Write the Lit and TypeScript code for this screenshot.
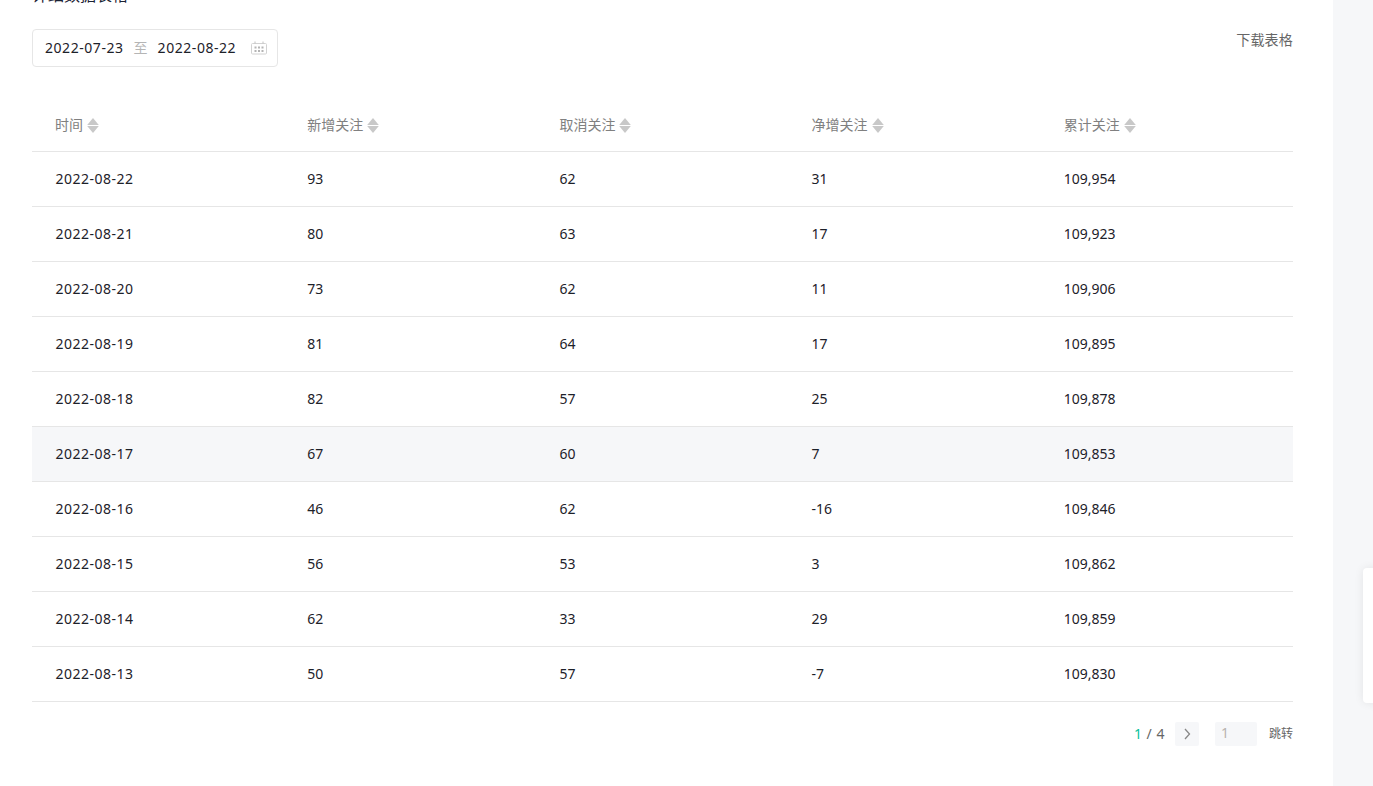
import { LitElement, html, css, svg } from "lit";
import { customElement } from "lit/decorators.js";

const rows = [
  ["2022-08-22", "93", "62", "31", "109,954"],
  ["2022-08-21", "80", "63", "17", "109,923"],
  ["2022-08-20", "73", "62", "11", "109,906"],
  ["2022-08-19", "81", "64", "17", "109,895"],
  ["2022-08-18", "82", "57", "25", "109,878"],
  ["2022-08-17", "67", "60", "7", "109,853"],
  ["2022-08-16", "46", "62", "-16", "109,846"],
  ["2022-08-15", "56", "53", "3", "109,862"],
  ["2022-08-14", "62", "33", "29", "109,859"],
  ["2022-08-13", "50", "57", "-7", "109,830"],
];
const heads = ["时间", "新增关注", "取消关注", "净增关注", "累计关注"];

@customElement("app-root")
export class AppRoot extends LitElement {
  static styles = css`
    :host {
      display: block;
      width: 1373px;
      height: 786px;
      overflow: hidden;
      position: relative;
      background: #fff;
      font-family: "Noto Sans", "Noto Sans CJK SC", sans-serif;
      color: #1d2129;
      font-size: 14px;
    }
    .layout { display: flex; height: 786px; }
    .main { width: 1333px; box-sizing: border-box; padding: 0 40px 0 32px; }
    .side { flex: 1; background: #f6f7f9; }
    .title { margin-top: -17px; height: 24px; font-size: 16px; line-height: 24px; color: #1a2233; }
    .toolbar { display: flex; justify-content: space-between; align-items: flex-start; margin-top: 22px; height: 38px; }
    .range {
      box-sizing: border-box; width: 246px; height: 38px; border: 1px solid #e6e6e6; border-radius: 4px;
      display: flex; align-items: center; padding: 0 10px 2px 12px; letter-spacing: 0.55px;
    }
    .range .sep { color: #b5b5b5; margin: 0 10px; letter-spacing: 0; }
    .range svg { margin-left: auto; margin-top: 2px; }
    .download { font-size: 14px; color: #666; line-height: 20px; margin: 1px 0 0 0; letter-spacing: 0.2px; }
    .grid { display: grid; grid-template-columns: repeat(5, 1fr); }
    .head, .row { display: contents; }
    .head > div {
      height: 52px; margin-top: 33px; box-sizing: border-box; border-bottom: 1px solid #e6e6e6;
      color: #808080; font-size: 14px; padding: 15px 0 0 23px; display: flex; align-items: flex-start; gap: 4px; line-height: 20px;
    }
    .head svg { margin-top: 2px; }
    .row > div {
      height: 55px; box-sizing: border-box; border-bottom: 1px solid #e6e6e6; padding: 0 0 2px 23px;
      display: flex; align-items: center; color: #1d2129;
    }
    .row > div.date { letter-spacing: 0.5px; padding-left: 23.4px; }
    .row.hl > div { background: #f6f7f9; }
    .pager { display: flex; justify-content: flex-end; align-items: center; margin-top: 20px; height: 24px; }
    .num { color: #666; letter-spacing: 0.5px; padding-bottom: 2px; }
    .num b { font-weight: 400; color: #07c19a; }
    .btn { width: 24px; height: 24px; background: #f6f7f9; border-radius: 2px; margin-left: 10px; display: flex; align-items: center; justify-content: center; }
    .input { box-sizing: border-box; width: 42px; height: 24px; background: #f6f7f9; border-radius: 2px; margin-left: 16px; padding-left: 6px; color: #b8b3b0; line-height: 22px; }
    .go { font-size: 12px; color: #666; margin-left: 12px; padding-bottom: 2px; }
    .card {
      position: absolute; left: 1363px; top: 568px; width: 40px; height: 135px; background: #fff;
      border-radius: 4px; box-shadow: 0 0 10px rgba(0, 0, 0, 0.08);
    }
  `;

  private sort() {
    return svg`<svg width="12" height="16" viewBox="0 0 12 16" fill="#c8c8c8"><path d="M6 1 11.8 8H.2Z"/><path d="M6 16 .2 9h11.6Z"/></svg>`;
  }

  render() {
    return html`
      <div class="layout">
        <div class="main">
          <div class="title">详细数据表格</div>
          <div class="toolbar">
            <div class="range">
              <span>2022-07-23</span><span class="sep">至</span><span>2022-08-22</span>
              <svg width="16" height="14" viewBox="0 0 16 14" fill="none" stroke="#d2d2d2">
                <rect x=".5" y="2.5" width="15" height="10.5" rx="1"/>
                <path d="M4 .5v2M12 .5v2" stroke="#c0c0c0"/>
                <path fill="#b4b4b4" stroke="none" d="M3.5 5.5h2v2h-2zM7 5.5h2v2H7zM10.5 5.5h2v2h-2zM3.5 9h2v2h-2zM7 9h2v2H7zM10.5 9h2v2h-2z"/>
              </svg>
            </div>
            <div class="download">下载表格</div>
          </div>
          <div class="grid">
            <div class="head">${heads.map((h) => html`<div><span>${h}</span>${this.sort()}</div>`)}</div>
            ${rows.map(
              (r, i) => html`<div class="row ${i === 5 ? "hl" : ""}">${r.map((c, j) => html`<div class=${j === 0 ? "date" : ""}>${c}</div>`)}</div>`
            )}
          </div>
          <div class="pager">
            <span class="num"><b>1</b> / 4</span>
            <span class="btn">
              <svg width="8" height="12" viewBox="0 0 8 12" fill="none" stroke="#888" stroke-width="1.3"><path d="M2 1 6.5 6 2 11"/></svg>
            </span>
            <span class="input">1</span>
            <span class="go">跳转</span>
          </div>
        </div>
        <div class="side"></div>
      </div>
      <div class="card"></div>
    `;
  }
}
